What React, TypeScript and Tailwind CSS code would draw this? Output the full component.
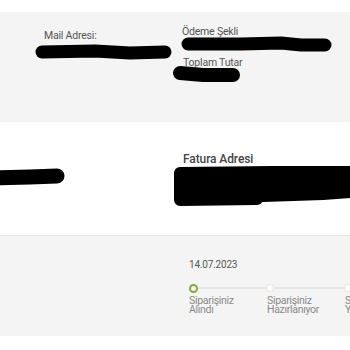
import React from "react";

const font = { fontFamily: 'Roboto, "Open Sans", Arial, sans-serif' };

function Scribble({ w, h, d, sw }: { w: number; h: number; d: string; sw: number }) {
  return (
    <svg width={w} height={h} viewBox={`0 0 ${w} ${h}`} className="block">
      <path d={d} stroke="#000" strokeWidth={sw} strokeLinecap="round" strokeLinejoin="round" fill="none" />
    </svg>
  );
}

function Step({ label1, label2, active }: { label1: string; label2: string; active?: boolean }) {
  return (
    <div className="flex w-[78px] shrink-0 flex-col">
      <div className="flex h-[10px] items-center">
        {active ? (
          <div className="ml-[1px] h-[9px] w-[9px] shrink-0 rounded-full border-2 border-[#84a83f] bg-[#f4f4f4]" />
        ) : (
          <div className="h-[8px] w-[8px] shrink-0 rounded-full border border-[#e2e2e2] bg-white" />
        )}
        <div className="h-[2px] flex-1 bg-[#e6e6e6]" />
      </div>
      <div className="mt-[3px] pl-[1px] text-[10.5px] leading-[9px] tracking-[-0.3px] text-[#8a8a8a]">
        <div>{label1}</div>
        <div>{label2}</div>
      </div>
    </div>
  );
}

export default function App() {
  return (
    <div className="h-[350px] w-[350px] overflow-hidden bg-white" style={font}>
      <div className="h-[12px]" />
      {/* Section 1 */}
      <div className="flex h-[110px] bg-[#f4f4f4] pt-[16px]">
        <div className="ml-[35px] flex w-[138px] flex-col">
          <div className="pl-[9px] text-[10.5px] leading-[15px] text-[#555] tracking-[-0.2px]">Mail Adresi:</div>
          <Scribble w={138} h={18} sw={13} d="M7 9 L60 8 L95 10 L130 9" />
        </div>
        <div className="flex flex-col">
          <div className="-mt-[3px] pl-[9px] text-[10.5px] leading-[14px] text-[#555] tracking-[-0.2px]">Ödeme Şekli</div>
          <div className="-mt-[3px] pl-[8px]">
            <Scribble w={152} h={18} sw={13} d="M7 8 L60 8 L100 7 L120 9 L144 9" />
          </div>
          <div className="mt-[2px] pl-[10px] text-[10.5px] leading-[13px] text-[#555] tracking-[-0.2px]">Toplam Tutar</div>
          <div className="-mt-[5px]">
            <Scribble w={68} h={20} sw={14} d="M7 9 L30 11 L60 11" />
          </div>
        </div>
      </div>
      {/* Section 2 */}
      <div className="flex h-[114px] border-b border-[#e8e8e8] bg-white pt-[30px]">
        <div className="flex w-[173px] flex-col pt-[15px]">
          <Scribble w={66} h={20} sw={15} d="M-10 11 L30 10 L57 9" />
        </div>
        <div className="flex flex-col">
          <div className="pl-[10px] text-[12px] font-medium leading-[15px] text-[#444] tracking-[-0.1px]">Fatura Adresi</div>
          <div className="-mt-[1px]">
            <svg width={177} height={44} viewBox="0 0 177 44" className="block">
              <path
                d="M7 7 L100 6 L177 5 L177 26 L150 28 L90 30 L7 30 Z"
                fill="#000"
                stroke="#000"
                strokeWidth={12}
                strokeLinejoin="round"
              />
              <path d="M7 24 L40 22 L84 22 L84 33 L7 34 Z" fill="#000" stroke="#000" strokeWidth={12} strokeLinejoin="round" />
            </svg>
          </div>
        </div>
      </div>
      {/* Section 3 */}
      <div className="h-[100px] bg-[#f4f4f4] pl-[188px] pt-[23px]">
        <div className="pl-[1px] text-[10px] leading-[12px] text-[#555] tracking-[-0.2px]">14.07.2023</div>
        <div className="mt-[12px] flex">
          <Step label1="Siparişiniz" label2="Alındı" active />
          <Step label1="Siparişiniz" label2="Hazırlanıyor" />
          <Step label1="Siparişiniz" label2="Yolda" />
        </div>
      </div>
    </div>
  );
}
